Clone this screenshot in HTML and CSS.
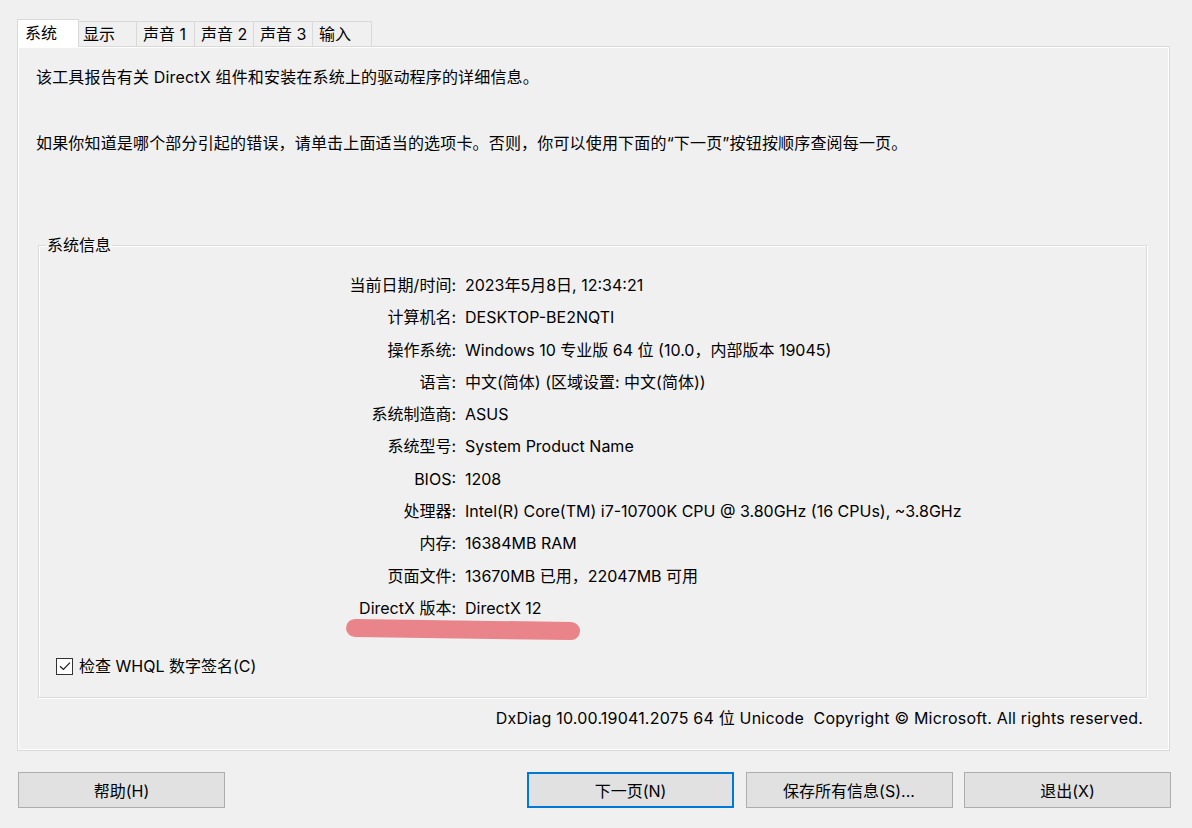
FILE: index.html
```html
<!DOCTYPE html>
<html lang="zh-CN">
<head>
<meta charset="utf-8">
<title>DirectX 诊断工具</title>
<link rel="stylesheet" href="styles.css">
</head>
<body>
<div class="tabs">
  <div class="tab active">系统</div>
  <div class="tab">显示</div>
  <div class="tab">声音 1</div>
  <div class="tab w59">声音 2</div>
  <div class="tab w59">声音 3</div>
  <div class="tab w59">输入</div>
</div>
<div class="panel">
  <p class="intro">该工具报告有关 DirectX 组件和安装在系统上的驱动程序的详细信息。</p>
  <p class="intro second">如果你知道是哪个部分引起的错误，请单击上面适当的选项卡。否则，你可以使用下面的“下一页”按钮按顺序查阅每一页。</p>
  <fieldset class="group">
    <legend>系统信息</legend>
    <div class="rows">
      <div class="lbl">当前日期/时间:</div><div class="val">2023年5月8日, 12:34:21</div>
      <div class="lbl">计算机名:</div><div class="val">DESKTOP-BE2NQTI</div>
      <div class="lbl">操作系统:</div><div class="val">Windows 10 专业版 64 位 (10.0，内部版本 19045)</div>
      <div class="lbl">语言:</div><div class="val">中文(简体) (区域设置: 中文(简体))</div>
      <div class="lbl">系统制造商:</div><div class="val">ASUS</div>
      <div class="lbl">系统型号:</div><div class="val">System Product Name</div>
      <div class="lbl">BIOS:</div><div class="val">1208</div>
      <div class="lbl">处理器:</div><div class="val">Intel(R) Core(TM) i7-10700K CPU @ 3.80GHz (16 CPUs), ~3.8GHz</div>
      <div class="lbl">内存:</div><div class="val">16384MB RAM</div>
      <div class="lbl">页面文件:</div><div class="val">13670MB 已用，22047MB 可用</div>
      <div class="lbl">DirectX 版本:</div><div class="val">DirectX 12</div>
    </div>
    <label class="check">
      <span class="box"><svg width="14" height="14" viewBox="0 0 14 14"><path d="M2 7.2 L5.4 10.4 L12 3.6" fill="none" stroke="#222" stroke-width="1.3"/></svg></span>
      <span>检查 WHQL 数字签名(C)</span>
    </label>
  </fieldset>
  <div class="copyright">DxDiag 10.00.19041.2075 64 位 Unicode&nbsp; Copyright © Microsoft. All rights reserved.</div>
</div>
<div class="buttons">
  <button class="btn">帮助(H)</button>
  <button class="btn default push">下一页(N)</button>
  <button class="btn">保存所有信息(S)...</button>
  <button class="btn">退出(X)</button>
</div>
<svg class="mark" width="1192" height="828" viewBox="0 0 1192 828">
  <line x1="355" y1="628" x2="571" y2="631" stroke="#e9858a" stroke-width="18" stroke-linecap="round"/>
</svg>
</body>
</html>
```

FILE: styles.css
```css
html, body {
  margin: 0;
  padding: 0;
}
body {
  width: 1192px;
  height: 828px;
  overflow: hidden;
  background: #f0f0f0;
  color: #000;
  font-family: "Inter", "Noto Sans CJK SC", sans-serif;
  font-size: 16px;
  position: relative;
}
.tabs {
  display: flex;
  align-items: flex-end;
  height: 28px;
  margin: 19px 0 0 17px;
  position: relative;
  z-index: 1;
}
.tab {
  box-sizing: border-box;
  width: 58px;
  height: 25px;
  margin-bottom: 1px;
  padding-left: 6px;
  border-top: 1px solid #d9d9d9;
  border-right: 1px solid #d9d9d9;
  background: #f0f0f0;
  line-height: 24px;
  white-space: nowrap;
}
.tab.w59 { width: 59px; }
.tab.active {
  width: 62px;
  height: 28px;
  margin-bottom: 0;
  padding-left: 7px;
  border-left: 1px solid #d9d9d9;
  background: #fff;
  line-height: 26px;
}
.tab.active + .tab { padding-left: 4px; }
.panel {
  box-sizing: border-box;
  height: 705px;
  margin: -1px 22px 0 17px;
  border: 1px solid #d9d9d9;
  box-shadow: inset 0 0 0 1px #fff;
  padding-top: 19px;
}
.intro {
  margin: 0 0 0 18px;
  line-height: 22px;
  letter-spacing: 0.17px;
  white-space: nowrap;
}
.intro.second { margin-top: 44px; }
.group {
  box-sizing: border-box;
  height: 464px;
  margin: 80px 22px 0 20px;
  padding: 0;
  border: 1px solid #dcdcdc;
  box-shadow: 1px 1px 0 #fff, inset 1px 1px 0 #fff;
  min-width: 0;
}
.group legend {
  margin-left: 7px;
  padding: 0 1px;
  line-height: 22px;
}
.rows {
  display: grid;
  grid-template-columns: 417px 1fr;
  column-gap: 9px;
  margin-top: 13px;
  line-height: 32.3px;
}
.lbl { text-align: right; white-space: nowrap; }
.val { white-space: nowrap; }
.check {
  display: flex;
  align-items: center;
  gap: 6px;
  margin: 31px 0 0 17px;
  line-height: 22px;
}
.box {
  box-sizing: border-box;
  width: 17px;
  height: 17px;
  border: 1px solid #333;
  background: #fff;
  display: flex;
  align-items: center;
  justify-content: center;
}
.copyright {
  margin: 9px 26px 0 0;
  text-align: right;
  line-height: 22px;
  letter-spacing: 0.2px;
  white-space: nowrap;
}
.buttons {
  display: flex;
  gap: 11.5px;
  margin: 21px 21px 0 18px;
}
.btn {
  box-sizing: border-box;
  width: 207px;
  height: 36px;
  margin: 0;
  padding: 0;
  border: 1px solid #adadad;
  background: #e1e1e1;
  font-family: inherit;
  font-size: 16px;
  color: #000;
}
.btn.default { border-color: #0078d7; box-shadow: inset 0 0 0 1px #0078d7; }
.btn.push { margin-left: auto; }
.mark {
  position: absolute;
  left: 0;
  top: 0;
  pointer-events: none;
}
```
